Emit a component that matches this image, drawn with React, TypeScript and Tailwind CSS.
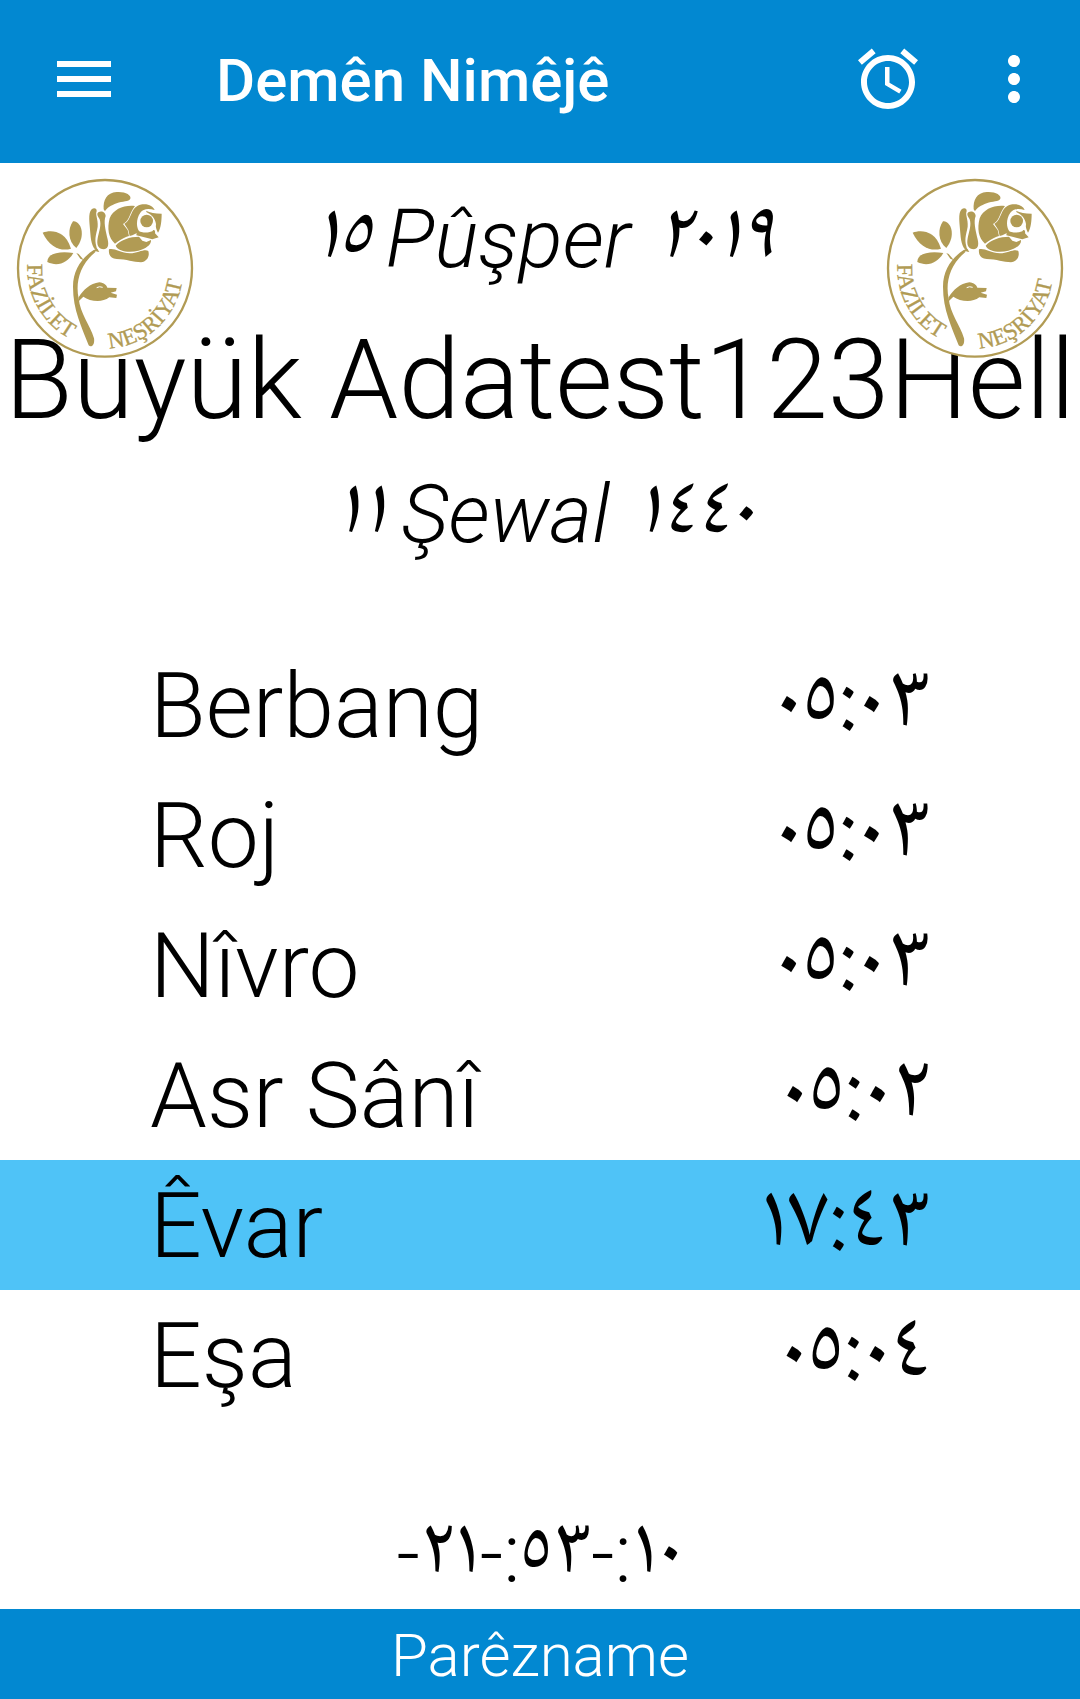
import { useId } from "react";

const prayerTimes = [
  { name: "Berbang", time: "٠٥:٠٣" },
  { name: "Roj", time: "٠٥:٠٣" },
  { name: "Nîvro", time: "٠٥:٠٣" },
  { name: "Asr Sânî", time: "٠٥:٠٢" },
  { name: "Êvar", time: "١٧:٤٣", current: true },
  { name: "Eşa", time: "٠٥:٠٤" },
];

function Logo({ className }: { className: string }) {
  const id = useId();
  return (
    <svg
      viewBox="0 0 570 585"
      role="img"
      aria-label="Fazilet Neşriyat"
      className={className}
      fill="#b19b54"
    >
      <defs>
        <path id={`${id}-left`} d="M52 282 A233 238 0 0 0 240 527" />
        <path id={`${id}-right`} d="M298 535 A234 240 0 0 0 519 280" />
      </defs>
      <ellipse cx="285" cy="295" rx="261" ry="265" fill="#fff" stroke="#b19b54" strokeWidth="7" />
      {/* rose bloom and leaves */}
      <g transform="translate(75 30)">
        <path d="M206 88C204 60 215 38 245 36C270 34 290 45 286 56C282 66 262 62 245 70C228 76 215 84 210 94Z" />
        <path d="M170 88C178 82 186 86 185 94C180 104 190 118 188 140C184 165 174 180 190 215C174 208 168 190 166 160C164 130 158 100 170 88Z" />
        <path d="M190 97C200 90 212 98 212 108C205 125 212 150 216 170C222 190 222 205 207 208C190 208 184 195 188 175C192 155 200 135 194 118C188 108 184 102 190 97Z" />
        <path d="M300 78C270 74 235 86 224 115C216 145 220 175 240 191C250 184 262 174 282 168L278 150L264 132C285 122 282 100 300 78Z" />
        <path d="M268 131C292 122 284 78 322 73C342 71 354 79 359 90C340 84 324 86 316 98C302 118 304 144 314 155L292 166L284 168L280 150Z" />
        <circle cx="335" cy="123" r="19" />
        <path d="M333 92C345 98 360 100 380 101C380 120 378 145 369 158C365 150 361 142 363 132C360 114 350 104 335 97Z" />
        <path d="M306 152C322 158 335 160 352 154C356 146 362 150 360 160L371 172L352 178L325 171L304 166Z" />
        <path d="M242 197C255 180 285 170 312 170L322 182L334 186L348 180C350 195 330 207 310 212C285 218 250 216 242 197Z" />
        <path d="M222 208C240 204 255 219 285 220C310 218 330 205 340 213C345 230 335 245 318 247C295 246 275 238 245 237C226 236 220 222 222 208Z" />
        <path d="M23 158C45 150 90 148 108 206C80 214 45 205 23 158Z" />
        <path d="M114 124C135 120 156 164 124 204C98 185 98 145 114 124Z" />
        <path d="M37 246C36 220 75 212 115 219C100 246 70 262 37 246Z" />
        <path d="M124 219L131 222L147 241L136 236Z" />
      </g>
      {/* stem and bud */}
      <path d="M251 240C215 264 189 300 189 350C189 420 215 470 236 526C244 534 255 524 252 505C240 465 210 430 206 385C196 340 208 285 257 245L254 243L268 246L262 236Z" />
      <path d="M206 382C220 360 240 340 268 337C282 338 290 346 292 353L320 354L318 364L302 368L321 374L319 384L298 382C275 400 240 394 220 380L206 394Z" />
      <path d="M260 353Q268 348 278 352" fill="none" stroke="#fff" strokeWidth="3" />
      <g className="font-['Liberation_Serif',serif] text-[68px]" stroke="#b19b54">
        <text>
          <textPath href={`#${id}-left`}>FAZİLET</textPath>
        </text>
        <text>
          <textPath href={`#${id}-right`}>NEŞRİYAT</textPath>
        </text>
      </g>
    </svg>
  );
}

function Digits({ children }: { children: string }) {
  return (
    <span className="block font-['Noto_Naskh_Arabic','DejaVu_Sans',sans-serif] font-normal proportional-nums">
      {children}
    </span>
  );
}

function DateLine({ day, month, year }: { day: string; month: string; year: string }) {
  return (
    <p className="flex justify-center gap-4 pl-2 text-[82px] leading-[138px] italic">
      <Digits>{day}</Digits>
      <span className="mr-2">{month}</span>
      <Digits>{year}</Digits>
    </p>
  );
}

export default function App() {
  return (
    <div className="flex min-h-screen flex-col overflow-x-hidden bg-white font-['Roboto','Noto_Naskh_Arabic','DejaVu_Sans',sans-serif] font-light text-black">
      <header className="flex h-[163px] items-center bg-[#0288d1] px-12 pb-[5px] text-white">
        <button type="button" aria-label="Menu" className="size-[72px]">
          <svg viewBox="0 0 24 24" fill="currentColor" className="size-full">
            <path d="M3 18h18v-2H3v2zm0-5h18v-2H3v2zm0-7v2h18V6H3z" />
          </svg>
        </button>
        <h1 className="ml-24 flex-1 pt-1 text-[60px] leading-[72px] font-medium">Demên Nimêjê</h1>
        <button type="button" aria-label="Alarms" className="size-[72px]">
          <svg viewBox="0 0 24 24" fill="currentColor" className="size-full">
            <path d="M22 5.72l-4.6-3.86-1.29 1.53 4.6 3.86L22 5.72zM7.88 3.39L6.6 1.86 2 5.71l1.29 1.53 4.59-3.85zM12.5 8H11v6l4.75 2.85.75-1.23-4-2.37V8zM12 4c-4.97 0-9 4.03-9 9s4.02 9 9 9c4.97 0 9-4.03 9-9s-4.03-9-9-9zm0 16c-3.87 0-7-3.13-7-7s3.13-7 7-7 7 3.13 7 7-3.13 7-7 7z" />
          </svg>
        </button>
        <button type="button" aria-label="More options" className="-mr-[18px] ml-[54px] size-[72px]">
          <svg viewBox="0 0 24 24" fill="currentColor" className="size-full">
            <path d="M12 8c1.1 0 2-.9 2-2s-.9-2-2-2-2 .9-2 2 .9 2 2 2zm0 2c-1.1 0-2 .9-2 2s.9 2 2 2 2-.9 2-2-.9-2-2-2zm0 6c-1.1 0-2 .9-2 2s.9 2 2 2 2-.9 2-2-.9-2-2-2z" />
          </svg>
        </button>
      </header>

      <main className="relative flex flex-1 flex-col">
        <section className="pt-[7px] text-center">
          <DateLine day="١٥" month="Pûşper" year="٢٠١٩" />
          <h2 className="pt-[7px] text-[111px] leading-[130px] whitespace-nowrap">Büyük Adatest123Hell</h2>
          <DateLine day="١١" month="Şewal" year="١٤٤٠" />
        </section>
        <Logo className="absolute top-[7px] left-[10px] w-[190px]" />
        <Logo className="absolute top-[7px] right-[10px] w-[190px]" />

        <table className="mt-[57px] w-full">
          <tbody>
            {prayerTimes.map((row) => (
              <tr key={row.name} className={row.current ? "bg-[#4fc3f7]" : ""}>
                <th scope="row" className="p-0 pt-0.5 pl-[150px] text-left text-[91px] leading-[128px] font-light">
                  {row.name}
                </th>
                <td className="p-0 pr-[150px] text-right text-[92px] leading-[130px]">
                  <Digits>{row.time}</Digits>
                </td>
              </tr>
            ))}
          </tbody>
        </table>

        <p className="mt-auto flex justify-center text-[82px] leading-[110px]">
          <span>-</span>
          <Digits>٢١</Digits>
          <span>-:</span>
          <Digits>٥٣</Digits>
          <span>-:</span>
          <Digits>١٠</Digits>
        </p>
      </main>

      <footer>
        <button type="button" className="h-[90px] w-full bg-[#0288d1] pt-1 text-[60px] leading-[86px] font-light text-white">
          Parêzname
        </button>
      </footer>
    </div>
  );
}
